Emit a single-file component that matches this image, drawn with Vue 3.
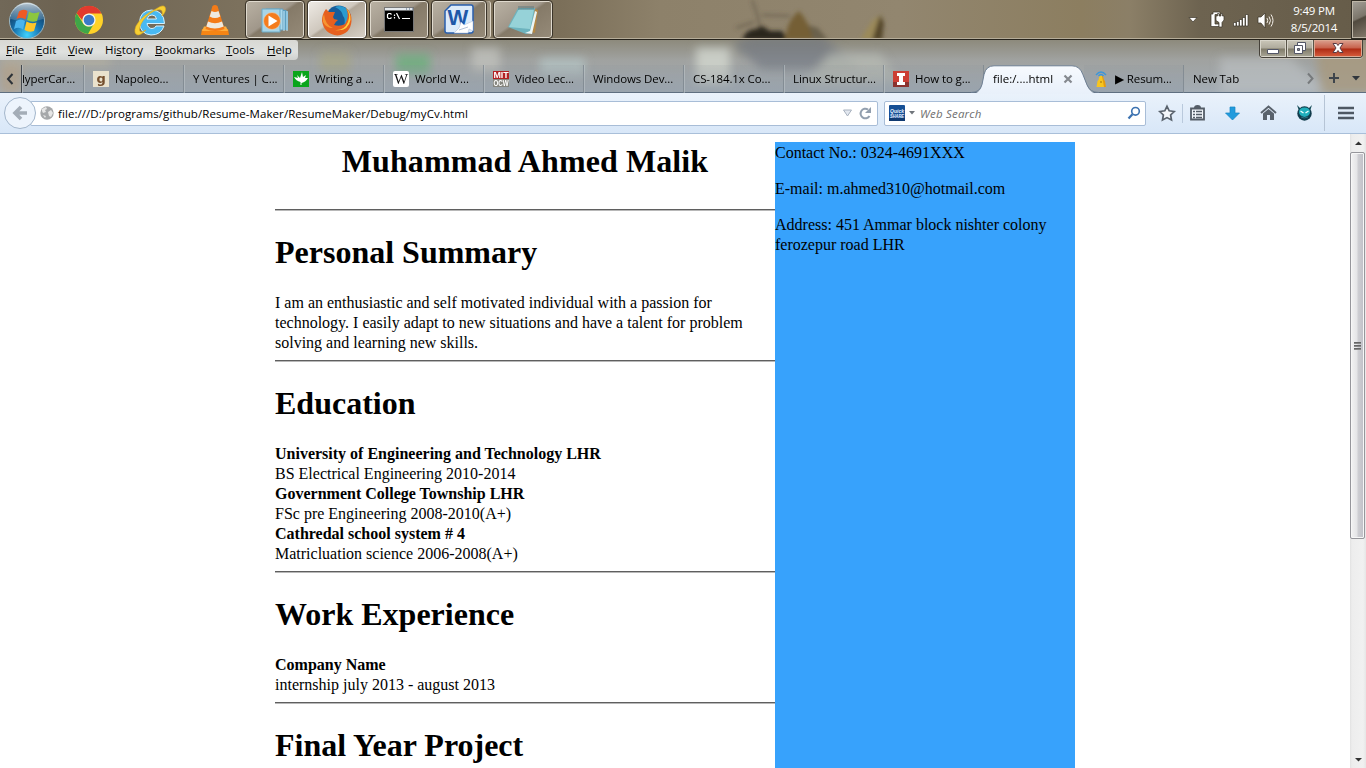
<script setup>
const menus = [
  ['', 'F', 'ile'], ['', 'E', 'dit'], ['', 'V', 'iew'], ['Hi', 's', 'tory'],
  ['', 'B', 'ookmarks'], ['', 'T', 'ools'], ['', 'H', 'elp'],
]
const tabs = [
  { label: 'Napoleo...', icon: 'g' },
  { label: 'Y Ventures | C...' },
  { label: 'Writing a ...', icon: 'leaf' },
  { label: 'World W...', icon: 'wiki' },
  { label: 'Video Lec...', icon: 'mit' },
  { label: 'Windows Dev...' },
  { label: 'CS-184.1x Co...' },
  { label: 'Linux Structur...' },
  { label: 'How to g...', icon: 'inst' },
  { label: 'file:/....html', active: true },
  { label: '▶ Resum...', icon: 'beacon' },
  { label: 'New Tab' },
]
const sections = [
  {
    title: 'Personal Summary',
    lines: [
      { t: 'I am an enthusiastic and self motivated individual with a passion for' },
      { t: 'technology. I easily adapt to new situations and have a talent for problem' },
      { t: 'solving and learning new skills.' },
    ],
  },
  {
    title: 'Education',
    lines: [
      { t: 'University of Engineering and Technology LHR', b: true },
      { t: 'BS Electrical Engineering 2010-2014' },
      { t: 'Government College Township LHR', b: true },
      { t: 'FSc pre Engineering 2008-2010(A+)' },
      { t: 'Cathredal school system # 4', b: true },
      { t: 'Matricluation science 2006-2008(A+)' },
    ],
  },
  {
    title: 'Work Experience',
    lines: [
      { t: 'Company Name', b: true },
      { t: 'internship july 2013 - august 2013' },
    ],
  },
  { title: 'Final Year Project', lines: [] },
]
</script>

<template>
  <div class="screen">
    <header class="taskbar">
      <svg class="wall" width="1366" height="38" viewBox="0 0 1366 38">
        <defs>
          <filter id="soft" x="-20%" y="-40%" width="140%" height="180%"><feGaussianBlur stdDeviation="2" /></filter>
        </defs>
        <g filter="url(#soft)">
          <path d="M742 40q4-11 14-11l6-3 8 5 12 0 6 9z" fill="#29251d" />
          <path d="M752 0l5 14 3 13M762 15l28 1M736 28l18-6" stroke="#51493a" stroke-width="2" fill="none" opacity=".6" />
          <path d="M804 24l14 4 10 12h-24z" fill="#6a604b" />
          <path d="M785 40q2-20 14-29 11 12 14 29z" fill="#745f34" />
          <path d="M860 40l12-19 8-6 2 12-6 13z" fill="#9b8a5a" />
          <path d="M872 40l8-25 4 8-2 17z" fill="#54462a" />
        </g>
      </svg>

      <div class="launch">
        <svg width="38" height="38" viewBox="0 0 38 38">
          <defs>
            <radialGradient id="orb" cx=".5" cy=".9" r=".85"><stop offset="0" stop-color="#3fd2ff" /><stop offset=".45" stop-color="#1874b0" /><stop offset="1" stop-color="#0d2f52" /></radialGradient>
            <linearGradient id="orbHi" x2="0" y2="1"><stop offset="0" stop-color="#e8f2f7" stop-opacity=".8" /><stop offset="1" stop-color="#a6c8dc" stop-opacity=".2" /></linearGradient>
          </defs>
          <circle cx="19" cy="20" r="17.500" fill="url(#orb)" stroke="#9cb7c2" />
          <path d="M2.500 18a16.500 16.500 0 0 1 33 0q-16 5-33 0z" fill="url(#orbHi)" />
          <path d="M11 10.500q4-3 8.500-.5l-2 8.500q-4-3-9-.5z" fill="#ee5a24" />
          <path d="M21 10.500q4 3 10.500.5l-2.500 9q-5 2-10-1z" fill="#8cc63f" />
          <path d="M8 20q5-3 9 0l-2 8.500q-4-3-9-.5z" fill="#4ab4ee" />
          <path d="M18.500 20.500q5 3 10 1l-2.500 8.500q-5 2-9.500-1z" fill="#ffc629" />
        </svg>
        <svg width="30" height="30" viewBox="0 0 30 30">
          <circle cx="15" cy="15" r="14" fill="#ffd228" />
          <path d="M2.600 8.300A14 14 0 0 1 27.500 8.500H15a6.600 6.600 0 0 0-6.500 7z" fill="#e13a2e" />
          <path d="M2.600 8.300A14 14 0 0 0 14 29l6-10.500a6.600 6.600 0 0 1-11.500-1z" fill="#3fa648" />
          <circle cx="15" cy="15" r="6.600" fill="#f4f4ee" /><circle cx="15" cy="15" r="5.300" fill="#3b7ac7" />
        </svg>
        <svg width="34" height="34" viewBox="0 0 34 34">
          <path d="M30 23q-3 9-13 9Q6 31 5.500 19.500 6 7.500 17.500 7 30 7.500 30.500 20.500H13q1 5 5 5 3 0 4-2.500zM13 16h9.500q-.5-4-4.500-4t-5 4z" fill="#49b9f2" stroke="#d4f2ff" stroke-width="1" />
          <path d="M22 6q7-5 9-2 2 4-3 9 1-5-1-6-2-1-7 1-9 5-13 13-3 7 0 8 2 0 5-2-5 5-8 5-5-1-2-9Q8 12 22 6z" fill="#f7cf32" stroke="#dcaa1c" stroke-width=".6" />
        </svg>
        <svg width="28" height="32" viewBox="0 0 28 32">
          <path d="M1 25h26l1 6H0z" fill="#f58514" /><path d="M3 22.500h22l2 4.500H1z" fill="#ffae3c" />
          <path d="M11.500 2q2.500-2 5 0l7 23q-9 4-19 0z" fill="#f47b18" />
          <path d="M10.500 7q3.500 2 7 0l1.800 5.500q-5.300 3-10.600 0zM7 17.500q7 3.500 14 0l1.700 5q-9 4-17.400 0z" fill="#eee9df" />
        </svg>
      </div>

      <nav class="apps">
        <div class="app">
          <svg width="34" height="34" viewBox="0 0 34 34">
            <path d="M11 7h17l2 2v18h-5z" fill="#5d9fc0" /><path d="M8 6h17v21H8z" fill="#a9d9ee" stroke="#649cbb" />
            <path d="M26 8v20M29 8v20" stroke="#c6edff" /><path d="M4 6h18v23H4z" fill="#a8d5e8" stroke="#6daac5" />
            <circle cx="14" cy="18" r="8.500" fill="#f57c1d" stroke="#e4d0b6" stroke-width=".7" /><path d="M10.500 12.500v11l9-5.500z" fill="#fff" />
          </svg>
        </div>
        <div class="app on">
          <svg width="32" height="32" viewBox="0 0 32 32">
            <circle cx="17.500" cy="14" r="12.500" fill="#195d99" /><path d="M14 3q6-3 12 2 4 5 3 13l-6 5q2-8-1-11-1-6-8-9z" fill="#2b9bd0" />
            <path d="M25 4q6 5 5.500 13-1 13-14 14.500Q3 30 1 17 1 10 5 5l3 3 6 0-2 5 1 2 4 1q-3 2-4 5 6 2 11-1 5-8 1-16z" fill="#e6601f" />
            <path d="M25 4q5 6 2 14-4 9-13 8 13 2 15.500-10Q30 8 25 4z" fill="#ffcf3c" /><path d="M3 10q1 11 9 14-7 0-10-6-1-4 1-8z" fill="#f79432" />
          </svg>
        </div>
        <div class="app">
          <svg width="30" height="26" viewBox="0 0 30 26">
            <path d="M.5.5h29v24H.5z" fill="#000" stroke="#777" /><path d="M1 1h28v2.500H1z" fill="#e4e8ec" /><path d="M22 2h1m2 0h1m2 0h1" stroke="#4c6582" />
            <path d="M7.500 7.500l-1-1h-2l-1 1v3l1 1h2l1-1M10.500 7.500v1.500m0 1v1.500M12.500 6l3 6M18 11.500h8" fill="none" stroke="#fff" stroke-width="1.200" />
          </svg>
        </div>
        <div class="app word">
          <svg width="30" height="31" viewBox="0 0 30 31">
            <path d="M7 1h20q2 0 2 2v24q0 2-2 2H3q-2 0-2-2V7z" fill="#dcebfb" stroke="#285fae" stroke-width="1.500" />
            <text x="14" y="20.500" class="wordw">W</text>
            <path d="M17 18l3 3 9-4v10l-4-2-1 4H10l5-5z" fill="#fff" stroke="#b1c2dc" stroke-width=".6" /><path d="M15 26l9-3" stroke="#b4c2d8" />
          </svg>
        </div>
        <div class="app">
          <svg width="32" height="30" viewBox="0 0 32 30">
            <path d="M28 4l3 1-3 23-7-2z" fill="#b38745" /><path d="M11 3h17l-4 25-5 1L1 22z" fill="#6db3be" />
            <path d="M12 4h15l-4 20-21-2z" fill="#a8dfe3" opacity=".7" /><path d="M28 6l-5 20-5 2 7 1 5-22z" fill="#e9f5f6" /><path d="M12 1v4m2-4v4m2-4v4m2-4v4m2-4v4m2-4v4m2-4v4m2-4v4" stroke="#56747b" stroke-width=".9" />
          </svg>
        </div>
      </nav>

      <div class="tray">
        <svg width="94" height="22" viewBox="0 0 94 22">
          <g stroke="#3b3529" stroke-width=".7">
            <path d="M4 8.500h8L8 13z" fill="#fff" />
            <path d="M28 3h7v2.500h-5V15h4v2.500h-8V5h2z" fill="#fff" />
            <path d="M31 9V7h1.500V4.500H34V7h2V4.500h1.500V7H39v4l-2 2.500V18h-3v-4.500L31 11.500z" fill="#fff" />
            <path d="M48.500 13.500h2.500V17h-2.500zM51.500 12.500H54V17h-2.500zM54.500 10.500H57V17h-2.500zM57.500 8.500H60V17h-2.500zM60.500 5.500H63V17h-2.500z" fill="#fff" />
            <path d="M73 8h3l4-4v15l-4-5h-3z" fill="#fff" />
          </g>
          <path d="M82 9q1.500 2.500 0 5M84 7.500q3 4 0 8M86 5.500q4 6 0 12" stroke="#f2eee8" fill="none" />
        </svg>
        <div class="clock"><span>9:49 PM</span><span>8/5/2014</span></div>
      </div>
      <div class="peek"></div>
    </header>

    <section class="chrome">
      <div class="blobs">
        <svg width="1366" height="53" viewBox="0 0 1366 53">
          <defs><filter id="haze" x="-10%" y="-40%" width="120%" height="180%"><feGaussianBlur stdDeviation="5" /></filter></defs>
          <g filter="url(#haze)">
            <path d="M0 14h110v15H0z" fill="#b9b4a2" opacity=".5" /><path d="M320 12h30v22h-30z" fill="#a9a878" opacity=".5" />
            <path d="M396 14h34v20h-34z" fill="#65b077" opacity=".7" /><path d="M472 8h28v24h-28z" fill="#bfc1bb" opacity=".8" />
            <path d="M540 18h45v18h-45z" fill="#b7c8c8" opacity=".7" /><path d="M696 8h34v36h-34z" fill="#cdd1ca" opacity=".9" />
            <path d="M732 4l20-8h70l40 34h-100z" fill="#6c737f" opacity=".6" /><path d="M830 14h50l20 28-100 6z" fill="#b5b9b2" opacity=".8" />
            <path d="M1220 18h70l40 35h-110z" fill="#bec3c5" opacity=".6" /><path d="M1315 4h60v50h-54z" fill="#a89777" opacity=".7" /><path d="M0 24h22v30H0z" fill="#b2a089" opacity=".8" />
          </g>
        </svg>
      </div>
      <div class="menurow">
        <nav class="menubar">
          <span v-for="m in menus" :key="m[2]">{{ m[0] }}<u>{{ m[1] }}</u>{{ m[2] }}</span>
        </nav>
        <div class="winctl">
          <i><svg width="14" height="14" viewBox="0 0 14 14"><path d="M1.500 8.500h11v4h-11z" fill="#fff" stroke="#535666" /></svg></i>
          <i><svg width="14" height="14" viewBox="0 0 14 14"><path d="M4.500 1.500h8v8h-8z" fill="#fff" stroke="#535666" /><path d="M1.500 4.500h8v8h-8z" fill="#fff" stroke="#535666" /><path d="M4.500 7.500h2v2h-2z" fill="#8b8b8b" stroke="#535666" /></svg></i>
          <i class="x"><svg width="14" height="14" viewBox="0 0 14 14"><path d="M2 2.500h3.500L7 4.500l1.500-2H12L9 7l3 4.500H8.500L7 9.500l-1.500 2H2L5 7z" fill="#fff" stroke="#5b3c44" /></svg></i>
        </div>
      </div>

      <div class="tabrow">
        <div class="scroll"><svg width="22" height="28" viewBox="0 0 22 28"><path d="M12.500 9L8 14l4.500 5" fill="none" stroke="#2c3238" stroke-width="2" /></svg></div>
        <div class="tab first"><span>lyperCar...</span></div>
        <div v-for="t in tabs" :key="t.label" class="tab" :class="{ active: t.active, plain: !t.icon, after: t.icon === 'beacon' }">
          <svg v-if="t.active" class="shape" width="128" height="29" viewBox="0 0 128 29">
            <defs><linearGradient id="tabFill" x2="0" y2="1"><stop offset="0" stop-color="#f7fafe" /><stop offset="1" stop-color="#e8f0fa" /></linearGradient></defs>
            <path d="M0 29q9 0 11-9l2-10Q15 .8 23 .8h78q8 0 11 9l4 11q3 8 12 8.200z" fill="url(#tabFill)" />
            <path d="M0 27.500q9 0 11-8l2-10Q15 .8 23 .8h78q8 0 11 9l4 10q3 7.700 12 7.700" fill="none" stroke="#6e7f93" />
          </svg>
          <svg v-if="t.icon" width="16" height="16" viewBox="0 0 16 16">
            <template v-if="t.icon === 'g'"><rect width="16" height="16" fill="#eae2cd" /><text x="8" y="11.500" class="gfav">g</text></template>
            <template v-else-if="t.icon === 'leaf'"><rect width="16" height="16" fill="#0aa51b" /><path d="M7.500 14V11Q3 10 1 6l4 1-1-3 3 3 2-6 1 5 3-2-1 3 3 0q-2 4-6.500 5V14z" fill="#fff" /></template>
            <template v-else-if="t.icon === 'wiki'"><rect width="16" height="16" rx="2" fill="#fff" /><text x="8" y="13" class="wfav">W</text></template>
            <template v-else-if="t.icon === 'mit'"><rect width="16" height="8" fill="#b32024" /><rect y="8" width="16" height="8" fill="#85857e" /><text x=".5" y="7" class="mfav" textLength="15" lengthAdjust="spacingAndGlyphs">MIT</text><text x=".5" y="15" class="mfav" textLength="15" lengthAdjust="spacingAndGlyphs">OCW</text></template>
            <template v-else-if="t.icon === 'inst'"><rect width="16" height="16" fill="#cc3e34" /><rect y="11" width="16" height="5" fill="#8b322e" /><path d="M4 2h8v3h-2v6h2v3H4v-3h2V5H4z" fill="#fff" /></template>
            <template v-else><path d="M6.500 5h3l1 4 1 1 1 6h-9l1-6 1-1z" fill="#f7c51f" /><path d="M9 5l2 11h2l-1-6-1-1-1-4z" fill="#e39b12" /><path d="M3 4q5-6 10 0M5.500 5Q8 2 10.500 5" fill="none" stroke="#3d96d8" stroke-width="1.400" /><path d="M8 10v2" stroke="#a16e0f" /></template>
          </svg>
          <span>{{ t.label }}</span>
          <svg v-if="t.active" class="close" width="10" height="10" viewBox="0 0 10 10"><path d="M1.500 1.500l7 7m0-7l-7 7" stroke="#85898f" stroke-width="2.200" /></svg>
        </div>
        <svg class="tabend" width="64" height="28" viewBox="0 0 64 28">
          <path d="M6 8.500l4.500 5-4.500 5" fill="none" stroke="#777a7c" stroke-width="2" /><path d="M27 13h10m-5-5v10" stroke="#3e454c" stroke-width="2" /><path d="M50 11h8l-4 4.500z" fill="#30363d" />
        </svg>
      </div>
    </section>

    <section class="toolbar">
      <div class="back"><svg width="30" height="30" viewBox="0 0 30 30"><path d="M22 15H10m6-6l-6 6 6 6" fill="none" stroke="#a4adb7" stroke-width="3.600" /></svg></div>
      <div class="url">
        <svg width="14" height="14" viewBox="0 0 14 14"><circle cx="7" cy="7" r="6.700" fill="#a6a8aa" /><path d="M2 3l4-2 1 2-2 1 1 2-3 1-1-2zM8 6l3-2 2 3-2 4-2-1zM3 9l3 1-1 2z" fill="#e6e6e6" /></svg>
        <span>file:///D:/programs/github/Resume-Maker/ResumeMaker/Debug/myCv.html</span>
        <svg class="reload" width="34" height="16" viewBox="0 0 34 16"><path d="M2.500 5h8l-4 6z" fill="#e3e8f0" stroke="#a9b2bf" /><path d="M27 4.500A4.800 4.800 0 1 0 28.500 11" fill="none" stroke="#929fae" stroke-width="2" /><path d="M30 2v6h-6z" fill="#929fae" /></svg>
      </div>
      <div class="search">
        <svg width="16" height="16" viewBox="0 0 16 16"><rect width="16" height="16" rx="1" fill="#164f94" /><rect y="13" width="16" height="3" fill="#103a71" /><text x="1" y="7.500" class="qfav" textLength="14" lengthAdjust="spacingAndGlyphs">Quick</text><text x="1" y="12.500" class="qfav" textLength="14" lengthAdjust="spacingAndGlyphs">SHARE</text></svg>
        <svg width="6" height="4" viewBox="0 0 6 4"><path d="M0 0h6L3 3.500z" fill="#70757b" /></svg>
        <em>Web Search</em>
        <svg class="lens" width="14" height="14" viewBox="0 0 14 14"><circle cx="8.500" cy="5.300" r="3.800" fill="#fff" stroke="#3c72b0" stroke-width="1.600" /><path d="M5.500 8.300L1.500 12.500" stroke="#3c72b0" stroke-width="2.300" /></svg>
      </div>
      <svg class="tools" width="209" height="40" viewBox="0 0 209 40">
        <path d="M10 13.300l2.200 4.500 5 .7-3.600 3.500.9 5-4.500-2.400L5.500 27l.9-5-3.600-3.500 5-.7z" fill="#f4f7fa" stroke="#59626c" stroke-width="1.700" />
        <path d="M25.500 11v19" stroke="#b9c9dc" />
        <path d="M34 15.500h13v11H34z" fill="#f2f6fa" stroke="#545d67" stroke-width="1.800" /><path d="M37 15q0-3 3.500-3t3.500 3z" fill="#545d67" /><path d="M36 18.500h2m1 0h6M36 21.500h2m1 0h6M36 24.500h2m1 0h6" stroke="#545d67" stroke-width="1.300" />
        <path d="M73 14h5v6h4.500l-7 7-7-7H73z" fill="#219bdd" stroke="#1685c2" stroke-width=".7" />
        <path d="M104 20l7.500-6.500 7.500 6.500" fill="none" stroke="#59626c" stroke-width="2" /><path d="M106 20.500l5.500-4.500 5.500 4.500V27h-4v-5h-3v5h-4z" fill="#59626c" />
        <path d="M142 18l-2-6 4 4zM153 18l2-6-4 4z" fill="#164d59" /><circle cx="147.500" cy="20.500" r="7.200" fill="#113c4c" /><path d="M142 19q0-4.500 5.500-4.500T153 19q0 4-5.500 5-5.500-1-5.500-5z" fill="#20aebb" /><path d="M143.500 18l3 2M151.500 18l-3 2" stroke="#efffff" stroke-width="1.300" /><path d="M144 24q3 2 7 0" stroke="#2a7180" fill="none" />
        <path d="M167.500 2v36" stroke="#b6c4d5" />
        <path d="M181 15h16M181 20h16M181 25h16" stroke="#4e5863" stroke-width="2.600" />
      </svg>
    </section>

    <main class="page">
      <div class="cv">
        <article>
          <h1 class="name">Muhammad Ahmed Malik</h1>
          <section v-for="s in sections" :key="s.title">
            <hr />
            <h1>{{ s.title }}</h1>
            <p v-for="l in s.lines" :key="l.t" :class="{ b: l.b }"><span>{{ l.t }}</span></p>
          </section>
        </article>
        <aside>
          <p>Contact No.: 0324-4691XXX</p>
          <p>E-mail: m.ahmed310@hotmail.com</p>
          <p>Address: 451 Ammar block nishter colony<br />ferozepur road LHR</p>
        </aside>
      </div>
      <div class="vbar">
        <svg class="up" width="16" height="18" viewBox="0 0 16 18"><path d="M5 11l3.500-3.500L12 11z" fill="#333" /></svg>
        <div class="thumb"><i></i><i></i><i></i></div>
        <svg class="down" width="16" height="17" viewBox="0 0 16 17"><path d="M5 7l3.500 3.500L12 7z" fill="#333" /></svg>
      </div>
    </main>
  </div>
</template>

<style>
html, body { margin: 0; overflow: hidden; }
</style>

<style scoped>
.screen { width: 1366px; height: 768px; display: flex; flex-direction: column; background: #fff; overflow: hidden; font: 11.5px "Open Sans", "Noto Sans", sans-serif; color: #000; }
svg { display: block; flex: none; }
.taskbar { position: relative; box-sizing: border-box; height: 40px; flex: none; display: flex; border-bottom: 1px solid #26231c; box-shadow: inset 0 -1px #b6ad99; background: linear-gradient(90deg, #716858 0, #6d6352 60px, #7c715d 240px, #857962 340px, #7b6f59 560px, #8d816a 660px, #92866f 900px, #8c7e60 1080px, #8b7f67 1130px, #6d6350 1200px, #665c49 1366px); }
.wall { position: absolute; left: 0; top: 0; }
.launch { position: relative; width: 246px; display: grid; grid-template-columns: 66px 60px 67px 1fr; align-items: center; padding-left: 8px; box-sizing: border-box; }
.apps { position: relative; display: flex; gap: 4px; padding-top: 1px; height: 38px; }
.app { width: 58px; height: 37px; box-sizing: border-box; border: 1px solid #e0dace; outline: 1px solid #3b3429; border-radius: 3px; display: flex; align-items: center; justify-content: center; background: linear-gradient(145deg, #b9b1a3 0, #a0978a 45%, #857a68 50%, #958a78 100%); }
.app.on { background: linear-gradient(145deg, #eeeae4 0, #cfc8be 46%, #b1a799 50%, #d7d0c6 100%); border-color: #fff; }
.app.word { width: 54px; margin-right: 4px; box-shadow: 4px 0 #9a907e, 5px 0 #ddd5c6; }
.wordw { font: bold 22px "Liberation Sans", sans-serif; text-anchor: middle; fill: #1f58a8; }
.tray { position: relative; margin-left: auto; display: flex; align-items: center; }
.tray > svg { margin-right: 4px; }
.clock { width: 62px; display: flex; flex-direction: column; align-items: center; line-height: 17px; color: #fff; padding-bottom: 1px; margin-right: 7px; letter-spacing: -.2px; }
.peek { position: relative; width: 14px; height: 37px; margin-top: 1px; border: 1px solid #bdb6a7; border-right: 0; outline: 1px solid #322e25; box-sizing: border-box; background: linear-gradient(155deg, #a19d95 0, #7b756a 45%, #514a3f 50%, #81786a 100%); }
.chrome { position: relative; height: 53px; flex: none; background: linear-gradient(#8d8a7c, #a0a2a0 20px, #a4adb5 53px); }
.blobs { position: absolute; inset: 0; overflow: hidden; }
.menurow { position: relative; height: 25px; display: flex; justify-content: space-between; align-items: flex-start; }
.menubar { width: 298px; height: 20px; box-sizing: border-box; padding-left: 6px; display: grid; grid-template-columns: 30px 32px 37px 50px 71px 41px auto; line-height: 20px; background: linear-gradient(#d8d8d3, #dfe1df 60%, #ced0ce); border-radius: 0 3px 4px 0; letter-spacing: -.05px; }
.winctl { margin-right: 3px; width: 104px; height: 18px; box-sizing: border-box; border: 1px solid #454139; border-top: 0; border-radius: 0 0 4px 4px; overflow: hidden; display: grid; grid-template-columns: 27px 27px 1fr; box-shadow: 0 1px #c8c5bb; }
.winctl i { display: flex; align-items: center; justify-content: center; border-right: 1px solid #5a5548; box-shadow: inset 0 0 0 1px #d8d5ca; background: linear-gradient(#cbc7b9 0, #aeaa9c 48%, #7f7a68 52%, #aaa797 100%); }
.winctl i svg { margin-top: -2px; }
.winctl .x { border: 0; background: linear-gradient(#dba190 0, #c7604a 48%, #ad2b14 52%, #d9603f 100%); box-shadow: inset 0 0 0 1px #dca892; }
.tabrow { position: relative; height: 28px; display: flex; box-shadow: inset 0 -1px #5f6f80; }
.scroll { width: 21px; }
.tab { position: relative; width: 100px; box-sizing: border-box; flex: none; display: flex; align-items: center; gap: 6px; padding: 0 0 1px 9px; white-space: nowrap; background: linear-gradient(#8f959a22, #8d98a477); letter-spacing: -.1px; box-shadow: inset -1px 0 #7b848dbb, inset 1px 0 #c0c6cb88, inset 0 -1px #5f6f80; }
.tab.first { width: 63px; padding-left: 0; border-left: 1px solid #454a50; }
.tab > span, .tab > svg:not(.shape) { position: relative; }
.tab.active { z-index: 2; background: none; box-shadow: none; letter-spacing: 0; }
.shape { position: absolute; left: -13px; top: 0; }
.close { margin-left: 4px; }
.tab.after { box-shadow: inset -1px 0 #7b848dbb, inset 0 -1px #5f6f80; }
.tab:last-of-type { box-shadow: inset 0 -1px #5f6f80; background: none; }
.tabend { margin-left: auto; }
.gfav { font: bold 13px "DejaVu Sans", sans-serif; text-anchor: middle; fill: #76502e; }
.wfav { font: 15px "Liberation Serif", serif; text-anchor: middle; fill: #111; }
.mfav { font: bold 8.5px "Liberation Sans", sans-serif; fill: #fff; }
.qfav { font: italic bold 5.5px "Liberation Sans", sans-serif; fill: #e7f1ff; }
.toolbar { height: 41px; flex: none; box-sizing: border-box; border-bottom: 1px solid #a9bfd9; background: linear-gradient(#eaf2fb, #d8e7f8); display: flex; align-items: center; padding-left: 4px; }
.back { z-index: 1; width: 30px; height: 30px; border: 1px solid #a3b6cb; border-radius: 50%; background: #edf4fc; }
.url { height: 25px; width: 848px; margin-left: -6px; box-sizing: border-box; border: 1px solid #a8bdd7; border-radius: 2px; background: #fff; display: flex; align-items: center; padding-left: 9px; gap: 4px; letter-spacing: .07px; }
.reload { margin-left: auto; margin-right: 2px; }
.search { margin-left: 6px; width: 262px; height: 25px; box-sizing: border-box; border: 1px solid #a8bdd7; border-radius: 2px; background: #fff; display: flex; align-items: center; padding: 0 4px; gap: 4px; color: #6f6f6f; }
.search em { margin-left: 1px; letter-spacing: .2px; }
.lens { margin-left: auto; }
.tools { margin-left: 11px; }
.page { flex: 1; min-height: 0; display: flex; overflow: hidden; font: 16px "Liberation Serif", serif; }
.cv { flex: 1; display: flex; padding: 8px 0 0 275px; }
article { width: 500px; }
article h1 { margin: 21px 0; font-size: 32px; line-height: 40px; white-space: nowrap; }
article .name { margin: -1px 0 29px; text-align: center; letter-spacing: .1px; }
hr { margin: 7px 0 0; border: 0; height: 1px; background: #5f5f5f; border-bottom: 1px solid #b8b8b8; }
article section:nth-of-type(1) hr { margin-top: 0; }
article .name { margin-bottom: 28px; }
article p { margin: 0; line-height: 20px; white-space: nowrap; }
.b { font-weight: bold; }
aside { width: 300px; height: 640px; padding-top: 1px; box-sizing: border-box; background: #37a2fc; }
aside p { margin: 0 0 16px; line-height: 20px; white-space: nowrap; }
.vbar { width: 16px; display: flex; flex-direction: column; background: linear-gradient(90deg, #e2e2e2 0, #ededed 2px, #f1f1f1 13px, #e6e6e6 16px); }
.thumb { width: 15px; height: 387px; box-sizing: border-box; border: 1px solid #96969b; border-radius: 2px; box-shadow: inset 0 0 0 1px #f7f7f7; background: linear-gradient(90deg, #f3f3f3 0, #e4e4e6 48%, #cfcfd3 52%, #bfbfc7 100%); display: flex; flex-direction: column; align-items: center; justify-content: center; gap: 1px; }
.thumb i { width: 7px; height: 2px; background: linear-gradient(#555, #999); }
.down { margin-top: auto; }
</style>
